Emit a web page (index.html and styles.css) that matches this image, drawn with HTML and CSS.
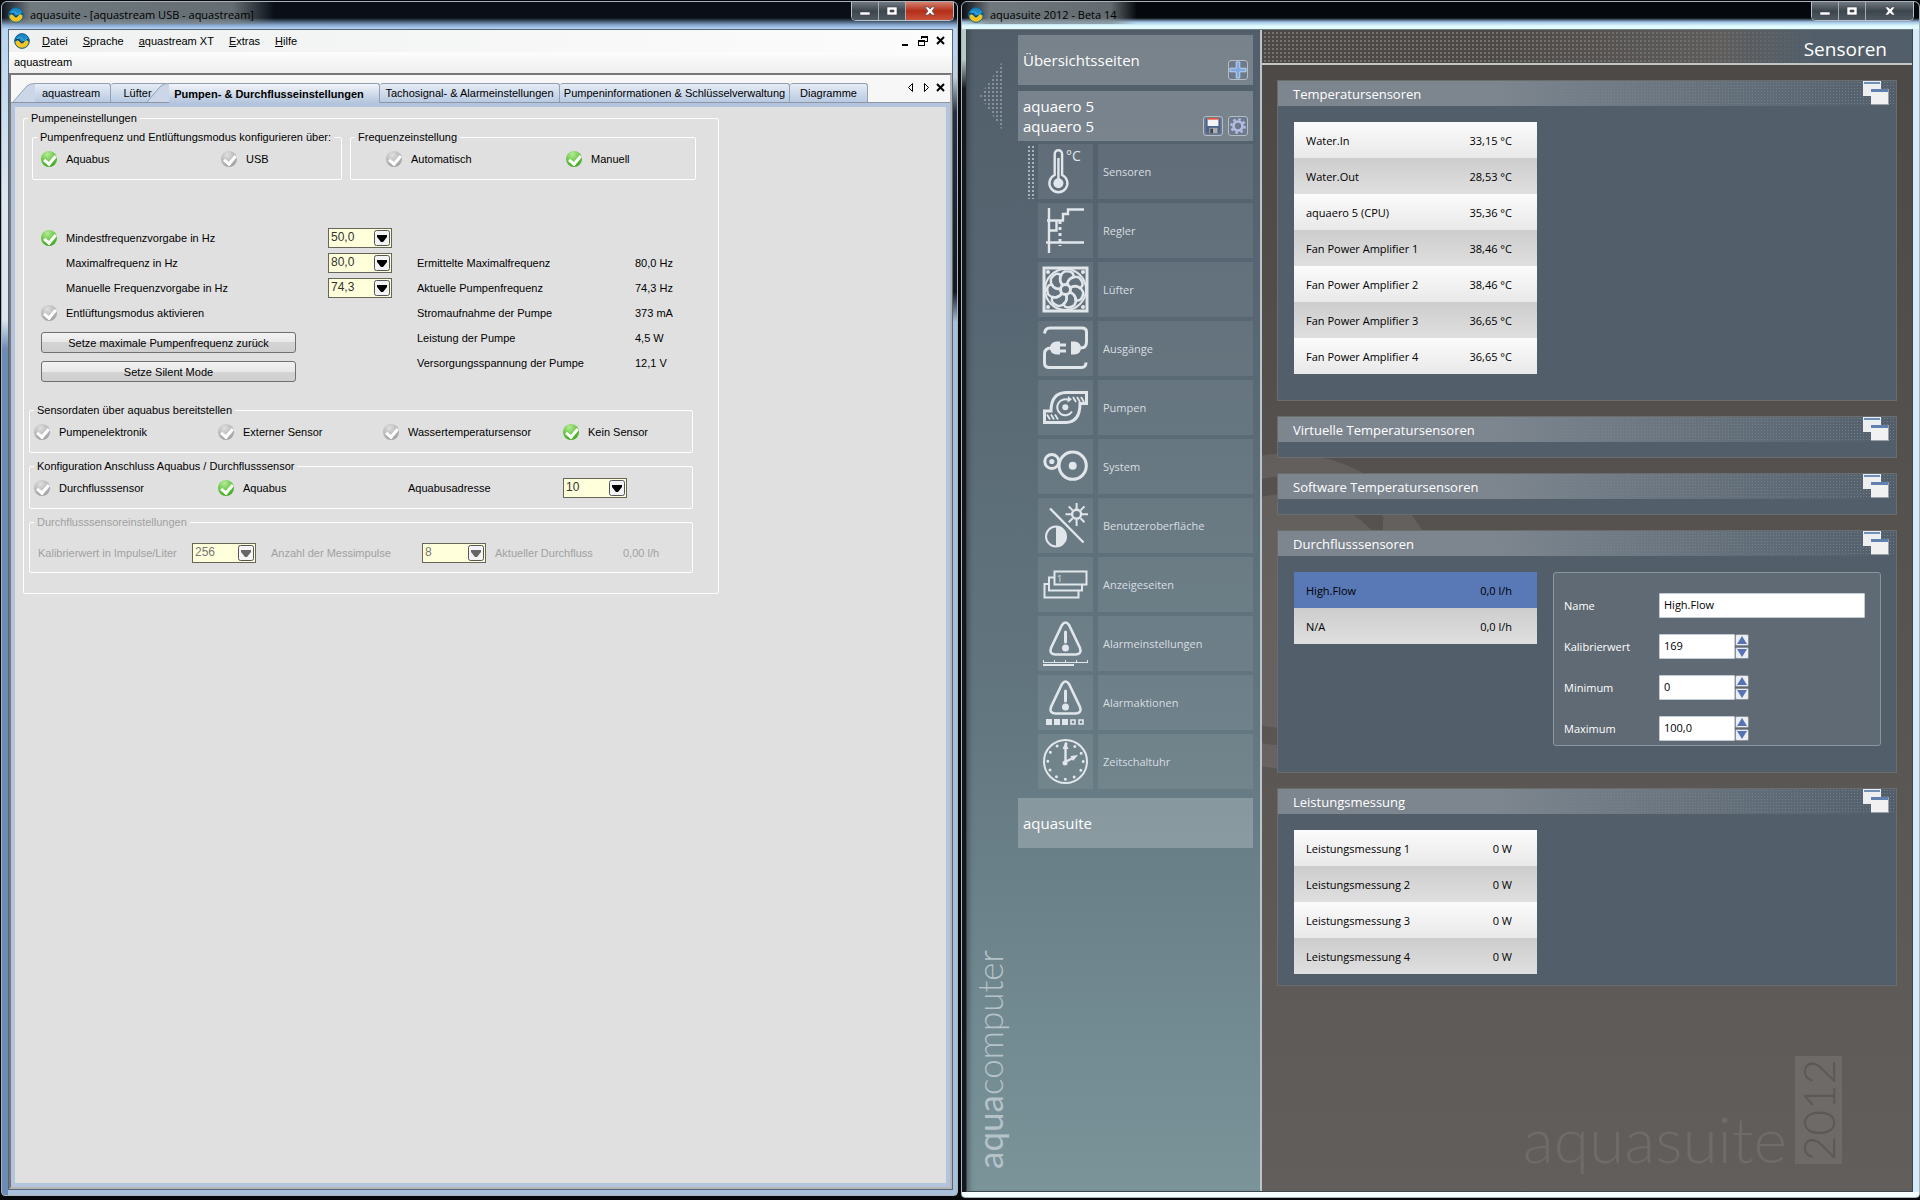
FILE: index.html
```html
<!DOCTYPE html>
<html lang="de">
<head>
    <meta charset="UTF-8">
    <meta name="viewport" content="width=device-width, initial-scale=1.0">
    <title>aquasuite</title>
    <link rel="stylesheet" href="styles.css">
</head>
<body>

    <!-- Shared icons -->
    <svg class="sprite" aria-hidden="true">
        <symbol id="logo" viewBox="0 0 16 16">
            <circle cx="8" cy="8" r="7.500" fill="#1d86c4"/>
            <path d="M1 9q3-3 5 0t4 0 4-1l1 2q-1 5-7 5.500T1 9z" fill="#f2c522"/>
            <path d="M1 7.500q3-2.500 5 .5t4 0T15 7.500" fill="none" stroke="#163c52" stroke-width="1.300"/>
            <path d="M3 6q3-3 5 0t5-1" fill="none" stroke="#2fa4dd" stroke-width="1.500"/>
            <circle cx="8" cy="8" r="7.300" fill="none" stroke="#175f86" stroke-width="1"/>
        </symbol>
        <symbol id="win-min" viewBox="0 0 12 12"><path d="M1 7h10v3H1z" fill="#fff" stroke="#445" stroke-width=".6"/></symbol>
        <symbol id="win-max" viewBox="0 0 12 12"><path d="M1 2h10v8H1zM4 5v2h4V5z" fill="#fff" fill-rule="evenodd" stroke="#445" stroke-width=".6"/></symbol>
        <symbol id="win-close" viewBox="0 0 12 12"><path d="M1 2h3l2 2 2-2h3L8 6l3 4H8L6 8l-2 2H1l3-4z" fill="#fff" stroke="#445" stroke-width=".6"/></symbol>
        <symbol id="arrow" viewBox="0 0 16 16">
            <rect x=".5" y=".5" width="15" height="15" rx="2" fill="#f4f4f4" stroke="#555"/>
            <path d="M3 5h10v2l-4 5H7L3 7z" fill="currentColor"/>
        </symbol>
        <symbol id="windows" viewBox="0 0 26 24">
            <path d="M0 0h18v15H0z" fill="#eceef0"/><path d="M1 1h16v2H1z" fill="#6f8fbb"/>
            <path d="M8 8h18v16H8z" fill="#9aa0a5"/><path d="M8 8h17v15H8z" fill="#f1f1f1"/><path d="M8 8h17v3H8z" fill="#6280ad"/>
        </symbol>
        <symbol id="alarm" viewBox="0 0 45 45">
            <path d="M19 4q3.500-5 7 0l11 23q2 6-4 6.500H12q-6-.5-4-6.500z" fill="none" stroke="#e1e6eb" stroke-width="2.600"/>
            <path d="M22.500 11v10" stroke="#e1e6eb" stroke-width="3" stroke-linecap="round"/>
            <circle cx="22.500" cy="27" r="2" fill="#e1e6eb"/>
        </symbol>
    </svg>

    <div class="desktop">

        <!-- aquasuite, aquastream USB -->
        <section class="window window-classic">
            <header class="titlebar">
                <svg class="logo"><use href="#logo"/></svg>
                <span class="caption">aquasuite - [aquastream USB - aquastream]</span>
                <div class="win-buttons">
                    <button type="button" aria-label="Minimieren"><svg><use href="#win-min"/></svg></button>
                    <button type="button" aria-label="Maximieren"><svg><use href="#win-max"/></svg></button>
                    <button type="button" class="close" aria-label="Schließen"><svg><use href="#win-close"/></svg></button>
                </div>
            </header>

            <div class="client">
                <nav class="menubar">
                    <svg class="logo"><use href="#logo"/></svg>
                    <a href="#"><u>D</u>atei</a>
                    <a href="#"><u>S</u>prache</a>
                    <a href="#"><u>a</u>quastream XT</a>
                    <a href="#"><u>E</u>xtras</a>
                    <a href="#"><u>H</u>ilfe</a>
                    <svg class="mdi" viewBox="0 0 44 12">
                        <path d="M1 9h6v2H1z"/>
                        <path d="M20 1h7v6h-3V6h2V3h-5v1h-1zM17 5h7v6h-7zM18 7v3h5V7z" fill-rule="evenodd"/>
                        <path d="M36 2l7 7M43 2l-7 7" stroke="#000" stroke-width="2"/>
                    </svg>
                </nav>
                <div class="breadcrumb">aquastream</div>

                <div class="document">
                    <div class="tabs">
                        <button type="button" class="tab slant tab-device"><svg viewBox="0 0 22 20" preserveAspectRatio="none"><path d="M0 20L14 3q3-2.500 8-2.500V20z"/><path class="edge" d="M0 20L14 3q3-2.500 8-2.500"/></svg>aquastream</button>
                        <button type="button" class="tab tab-fan">Lüfter</button>
                        <button type="button" class="tab slant active"><svg viewBox="0 0 22 20" preserveAspectRatio="none"><path d="M0 20L14 3q3-2.500 8-2.500V20z"/><path class="edge" d="M0 20L14 3q3-2.500 8-2.500"/></svg>Pumpen- &amp; Durchflusseinstellungen</button>
                        <button type="button" class="tab tab-wide">Tachosignal- &amp; Alarmeinstellungen</button>
                        <button type="button" class="tab tab-info">Pumpeninformationen &amp; Schlüsselverwaltung</button>
                        <button type="button" class="tab tab-chart">Diagramme</button>
                        <svg class="tab-nav" viewBox="0 0 40 12">
                            <path d="M5.500 1.500v8l-4-4zM17.500 1.500v8l4-4z" fill="none" stroke="#000"/>
                            <path d="M30 2l7 7M37 2l-7 7" stroke="#000" stroke-width="2"/>
                        </svg>
                    </div>

                    <form class="page">
                        <fieldset class="pump">
                            <legend>Pumpeneinstellungen</legend>

                            <div class="group-row">
                                <fieldset class="group source">
                                    <legend>Pumpenfrequenz und Entlüftungsmodus konfigurieren über:</legend>
                                    <label><input type="radio" name="source" checked>Aquabus</label>
                                    <label><input type="radio" name="source">USB</label>
                                </fieldset>
                                <fieldset class="group mode">
                                    <legend>Frequenzeinstellung</legend>
                                    <label><input type="radio" name="mode">Automatisch</label>
                                    <label><input type="radio" name="mode" checked>Manuell</label>
                                </fieldset>
                            </div>

                            <div class="frequency">
                                <div class="settings">
                                    <div class="field">
                                        <label><input type="checkbox" checked>Mindestfrequenzvorgabe in Hz</label>
                                        <span class="combo"><select aria-label="Mindestfrequenz"><option>50,0</option></select><svg><use href="#arrow"/></svg></span>
                                    </div>
                                    <div class="field">
                                        <label class="plain" for="max-freq">Maximalfrequenz in Hz</label>
                                        <span class="combo"><select id="max-freq"><option>80,0</option></select><svg><use href="#arrow"/></svg></span>
                                    </div>
                                    <div class="field">
                                        <label class="plain" for="man-freq">Manuelle Frequenzvorgabe in Hz</label>
                                        <span class="combo"><select id="man-freq"><option>74,3</option></select><svg><use href="#arrow"/></svg></span>
                                    </div>
                                    <div class="field">
                                        <label><input type="checkbox">Entlüftungsmodus aktivieren</label>
                                    </div>
                                    <button type="button" class="push">Setze maximale Pumpenfrequenz zurück</button>
                                    <button type="button" class="push">Setze Silent Mode</button>
                                </div>
                                <table class="readings">
                                    <tr><td>Ermittelte Maximalfrequenz</td><td>80,0 Hz</td></tr>
                                    <tr><td>Aktuelle Pumpenfrequenz</td><td>74,3 Hz</td></tr>
                                    <tr><td>Stromaufnahme der Pumpe</td><td>373 mA</td></tr>
                                    <tr><td>Leistung der Pumpe</td><td>4,5 W</td></tr>
                                    <tr><td>Versorgungsspannung der Pumpe</td><td>12,1 V</td></tr>
                                </table>
                            </div>

                            <fieldset class="group four">
                                <legend>Sensordaten über aquabus bereitstellen</legend>
                                <label><input type="radio" name="sensor">Pumpenelektronik</label>
                                <label><input type="radio" name="sensor">Externer Sensor</label>
                                <label><input type="radio" name="sensor">Wassertemperatursensor</label>
                                <label><input type="radio" name="sensor" checked>Kein Sensor</label>
                            </fieldset>

                            <fieldset class="group four">
                                <legend>Konfiguration Anschluss Aquabus / Durchflusssensor</legend>
                                <label><input type="radio" name="port">Durchflusssensor</label>
                                <label><input type="radio" name="port" checked>Aquabus</label>
                                <label class="plain" for="address">Aquabusadresse</label>
                                <span class="combo"><select id="address"><option>10</option></select><svg><use href="#arrow"/></svg></span>
                            </fieldset>

                            <fieldset class="group flow" disabled>
                                <legend>Durchflusssensoreinstellungen</legend>
                                <label for="impulse">Kalibrierwert in Impulse/Liter</label>
                                <span class="combo"><select id="impulse"><option>256</option></select><svg><use href="#arrow"/></svg></span>
                                <label for="count">Anzahl der Messimpulse</label>
                                <span class="combo"><select id="count"><option>8</option></select><svg><use href="#arrow"/></svg></span>
                                <span>Aktueller Durchfluss</span>
                                <span>0,00 l/h</span>
                            </fieldset>
                        </fieldset>
                    </form>
                </div>
            </div>
        </section>

        <!-- aquasuite 2012 -->
        <section class="window window-2012">
            <header class="titlebar">
                <svg class="logo"><use href="#logo"/></svg>
                <span class="caption">aquasuite 2012 - Beta 14</span>
                <div class="win-buttons">
                    <button type="button" aria-label="Minimieren"><svg><use href="#win-min"/></svg></button>
                    <button type="button" aria-label="Maximieren"><svg><use href="#win-max"/></svg></button>
                    <button type="button" class="close" aria-label="Schließen"><svg><use href="#win-close"/></svg></button>
                </div>
            </header>

            <div class="client">
                <aside class="sidebar">
                    <div class="rail">
                        <div class="collapse"></div>
                        <div class="brand"><b>aqua</b>computer</div>
                    </div>
                    <nav class="nav">
                        <div class="card">
                            <span>Übersichtsseiten</span>
                            <button type="button" class="tool" aria-label="Seite hinzufügen"><svg viewBox="0 0 20 20"><path d="M8 1h4v7h7v4h-7v7H8v-7H1V8h7z" fill="#7fa8e0" stroke="#c5d9f4"/></svg></button>
                        </div>
                        <div class="card">
                            <span>aquaero 5<br>aquaero 5</span>
                            <button type="button" class="tool" aria-label="Speichern"><svg viewBox="0 0 20 20"><path d="M2 2h16v16H3l-1-1z" fill="#4c6390"/><path d="M4 2h12v8H4z" fill="#f4f4f6"/><path d="M4 1h12v2H4z" fill="#e0563f"/><path d="M6 12h9v6H6z" fill="#a9adae"/><path d="M7 13h3v5H7z" fill="#444"/></svg></button>
                            <button type="button" class="tool" aria-label="Einstellungen"><svg viewBox="0 0 20 20"><circle cx="10" cy="10" r="5" fill="none" stroke="#b4bce0" stroke-width="3"/><circle cx="10" cy="10" r="7.500" fill="none" stroke="#b4bce0" stroke-width="2.500" stroke-dasharray="3 2.890"/></svg></button>
                        </div>
                        <ul class="menu">
                            <li class="current"><a href="#"><span class="icon"><svg viewBox="0 0 45 45">
                                <path d="M11.700 26V5a3.700 3.700 0 0 1 7.400 0v21a9 9 0 1 1-7.400 0z" stroke-width="2.400"/><path d="M15.400 9v22" stroke-width="2.400"/><circle class="solid" cx="15.400" cy="34.300" r="5"/>
                                <text x="23" y="12" font-size="14">°C</text></svg></span><span class="label">Sensoren</span></a></li>
                            <li><a href="#"><span class="icon"><svg viewBox="0 0 45 45">
                                <path d="M6 0v45M3 34.500h38M4 12.500h16V6h5V1.500h16M6 22.500h7.500v-10" stroke-width="2.400"/><path d="M17 13v25" stroke-dasharray="3 3"/></svg></span><span class="label">Regler</span></a></li>
                            <li><a href="#"><span class="icon"><svg viewBox="0 0 45 45">
                                <path d="M1 1h43v43H1z"/><circle cx="22.500" cy="22.500" r="20.500" stroke-width="2"/><circle cx="22.500" cy="22.500" r="5"/>
                                <circle class="solid" cx="5" cy="5" r="2"/><circle class="solid" cx="40" cy="5" r="2"/><circle class="solid" cx="5" cy="40" r="2"/><circle class="solid" cx="40" cy="40" r="2"/>
                                <g transform="translate(22.500 22.500)">
                                    <path id="petal" d="M-3-4Q-9-13-1-18 9-19 8-12 2-11 2-5" stroke-width="2.400"/>
                                    <use href="#petal" transform="rotate(51)"/><use href="#petal" transform="rotate(103)"/><use href="#petal" transform="rotate(154)"/>
                                    <use href="#petal" transform="rotate(206)"/><use href="#petal" transform="rotate(257)"/><use href="#petal" transform="rotate(309)"/>
                                </g></svg></span><span class="label">Lüfter</span></a></li>
                            <li><a href="#"><span class="icon"><svg viewBox="0 0 45 45">
                                <path d="M1.500 7.500Q2 2 7 2h32q4.500 0 4.500 4v10q0 6-6 6M8 22q-6.500 0-6.500 6v9q0 4.500 5 4.500h32q4.500 0 4.500-5"/>
                                <path class="solid" d="M17 15.500h-4q-6 1-6 6.500t6 6.500h4zM17 17.500h6v3h-6zM17 23.500h6v3h-6zM28 15.500h4q6 1 6 6.500t-6 6.500h-4z"/></svg></span><span class="label">Ausgänge</span></a></li>
                            <li><a href="#"><span class="icon"><svg viewBox="0 0 45 45">
                                <path d="M1.500 26H8Q8 8 23 7.500h20.500v11H37Q37 37 23 37.500H1.500z"/><circle class="solid" cx="22.300" cy="22.300" r="3"/>
                                <path d="M29 26.500a8 8 0 1 1-2.500-11" stroke-width="2"/><path class="solid" d="M25 11l4 3.500-4.500 3z"/>
                                <path d="M30 12l3 5M34 12l3 5M38 12l3 5M4 29.500l3 5M8 29.500l3 5M12 29.500l3 5" stroke-width="1.800"/></svg></span><span class="label">Pumpen</span></a></li>
                            <li><a href="#"><span class="icon"><svg viewBox="0 0 45 45">
                                <circle cx="8.800" cy="17.500" r="7"/><circle class="solid" cx="8.800" cy="17.500" r="2.600"/>
                                <circle cx="29.700" cy="21.700" r="13.600"/><circle class="solid" cx="29.700" cy="21.700" r="4"/></svg></span><span class="label">System</span></a></li>
                            <li><a href="#"><span class="icon"><svg viewBox="0 0 45 45">
                                <path d="M7 5.500l33.500 34" stroke-width="2.400"/><circle cx="13" cy="33.500" r="10" stroke-width="2"/><path class="solid" d="M13 23.500a10 10 0 0 1 0 20z"/>
                                <circle cx="33.600" cy="11.300" r="4.500" stroke-width="2.400"/><path d="M33.600 0v6M33.600 17v6M22.500 11.300h6M39 11.300h6M25.700 3.400l4 4M37.500 15.200l4 4M41.500 3.400l-4 4M29.700 15.200l-4 4" stroke-width="2"/></svg></span><span class="label">Benutzeroberfläche</span></a></li>
                            <li><a href="#"><span class="icon"><svg viewBox="0 0 45 45">
                                <path d="M11.500 9.500h32v13h-32zM11 15.500H6v13h33V23M5 22H1.500v13.500h34V29" stroke-width="2"/>
                                <text x="14" y="20" font-size="9">1</text></svg></span><span class="label">Anzeigeseiten</span></a></li>
                            <li><a href="#"><span class="icon"><svg viewBox="0 0 45 45">
                                <use href="#alarm"/><path d="M0 41.500h45M.5 39v3M11.500 39v3M22.500 39v3M33.500 39v3M44.500 39v3" stroke-width="1"/><path d="M0 44h31" stroke-width="2"/></svg></span><span class="label">Alarmeinstellungen</span></a></li>
                            <li><a href="#"><span class="icon"><svg viewBox="0 0 45 45">
                                <use href="#alarm"/><path class="solid" d="M3 39h6v6H3zM11 39h6v6h-6zM19 39h6v6h-6z"/><path d="M28 40h4v4h-4zM36 40h4v4h-4z" stroke-width="1.600"/></svg></span><span class="label">Alarmaktionen</span></a></li>
                            <li><a href="#"><span class="icon"><svg viewBox="0 0 45 45">
                                <circle cx="22.500" cy="22.500" r="21.500" stroke-width="2"/><circle cx="22.500" cy="22.500" r="17.700" stroke-dasharray="0 9.268" stroke-linecap="round"/>
                                <path d="M22.500 23V8M22 23l8-4" stroke-width="2.400"/><path class="solid" d="M22.500 3l3 7h-6zM35 16l-5 6-2.500-5z"/><circle class="solid" cx="22" cy="24" r="2.500"/></svg></span><span class="label">Zeitschaltuhr</span></a></li>
                        </ul>
                        <div class="card">
                            <span>aquasuite</span>
                        </div>
                    </nav>
                </aside>

                <main class="main">
                    <svg class="ring" viewBox="0 0 190 328">
                        <circle cx="25" cy="164" r="146" fill="none" stroke="#fff" stroke-width="23"/>
                        <circle cx="25" cy="164" r="117" fill="#fff"/>
                        <path d="M121 72h29v20h-29z" fill="#fff"/>
                    </svg>
                    <header class="page-title"><h1>Sensoren</h1></header>

                    <div class="panels">
                        <article class="panel">
                            <header><h2>Temperatursensoren</h2><svg><use href="#windows"/></svg></header>
                            <div class="body">
                                <table class="list">
                                    <tr><td>Water.In</td><td>33,15 °C</td></tr>
                                    <tr><td>Water.Out</td><td>28,53 °C</td></tr>
                                    <tr><td>aquaero 5 (CPU)</td><td>35,36 °C</td></tr>
                                    <tr><td>Fan Power Amplifier 1</td><td>38,46 °C</td></tr>
                                    <tr><td>Fan Power Amplifier 2</td><td>38,46 °C</td></tr>
                                    <tr><td>Fan Power Amplifier 3</td><td>36,65 °C</td></tr>
                                    <tr><td>Fan Power Amplifier 4</td><td>36,65 °C</td></tr>
                                </table>
                            </div>
                        </article>
                        <article class="panel collapsed">
                            <header><h2>Virtuelle Temperatursensoren</h2><svg><use href="#windows"/></svg></header>
                        </article>
                        <article class="panel collapsed">
                            <header><h2>Software Temperatursensoren</h2><svg><use href="#windows"/></svg></header>
                        </article>
                        <article class="panel">
                            <header><h2>Durchflusssensoren</h2><svg><use href="#windows"/></svg></header>
                            <div class="body">
                                <table class="list">
                                    <tr class="selected"><td>High.Flow</td><td>0,0 l/h</td></tr>
                                    <tr><td>N/A</td><td>0,0 l/h</td></tr>
                                </table>
                                <form class="details">
                                    <label for="name">Name</label>
                                    <input type="text" id="name" value="High.Flow">
                                    <label for="calibration">Kalibrierwert</label>
                                    <span class="spin"><input type="text" id="calibration" value="169"><button type="button" aria-label="Mehr"></button><button type="button" class="down" aria-label="Weniger"></button></span>
                                    <label for="minimum">Minimum</label>
                                    <span class="spin"><input type="text" id="minimum" value="0"><button type="button" aria-label="Mehr"></button><button type="button" class="down" aria-label="Weniger"></button></span>
                                    <label for="maximum">Maximum</label>
                                    <span class="spin"><input type="text" id="maximum" value="100,0"><button type="button" aria-label="Mehr"></button><button type="button" class="down" aria-label="Weniger"></button></span>
                                </form>
                            </div>
                        </article>
                        <article class="panel last">
                            <header><h2>Leistungsmessung</h2><svg><use href="#windows"/></svg></header>
                            <div class="body">
                                <table class="list">
                                    <tr><td>Leistungsmessung 1</td><td>0 W</td></tr>
                                    <tr><td>Leistungsmessung 2</td><td>0 W</td></tr>
                                    <tr><td>Leistungsmessung 3</td><td>0 W</td></tr>
                                    <tr><td>Leistungsmessung 4</td><td>0 W</td></tr>
                                </table>
                            </div>
                        </article>
                    </div>

                    <footer class="watermark"><span>aquasuite</span><b>2012</b></footer>
                </main>
            </div>
        </section>
    </div>

</body>
</html>
```
FILE: styles.css
```css
:root {
    --face: #e0e0e0;
    --tab-blue: #b3c4dc;
    --slate: #525f6b;
    --slate-light: #7d868f;
    --icon: #e1e6eb;
    --classic: "Liberation Sans", Arial, sans-serif;
    --segoe: "Open Sans", "Segoe UI", sans-serif;
}

* {
    box-sizing: border-box;
}

body {
    margin: 0;
    background: #05070a;
    font-family: var(--segoe);
    font-size: 11px;
    color: #000;
}

button, input, select {
    font: inherit;
    color: inherit;
    margin: 0;
    padding: 0;
}

a {
    color: inherit;
    text-decoration: none;
}

.sprite {
    display: none;
}

.desktop {
    display: grid;
    grid-template-columns: 957fr 959fr;
    gap: 3px;
    min-height: 100vh;
    padding: 1px 0 2px 1px;
}

/* Window frames */
.window {
    display: flex;
    flex-direction: column;
    border: 1px solid #a9b2bb;
    border-radius: 6px 6px 4px 4px;
}

.window-classic {
    padding: 0 4px 5px 6px;
    background:
        linear-gradient(#0a0f17, #0a0f17 16px, #86a8cf 23px, #b8d4f2 27px) 0 0 / 100% 27px no-repeat,
        linear-gradient(#b8d4f2, #dfe8f0 180px, #dfe8f0 290px, #6d8cb5 320px, #6d8cb5) 0 27px / 6px 100% no-repeat,
        linear-gradient(#b8d4f2, #b8d4f2 50px, #c3cfda 75px, #27303b 110px, #14191f 290px, #a9c0dc 320px, #a9c0dc);
    margin-bottom: 2px;
}

.window-2012 {
    padding: 0 6px 5px 4px;
    background:
        linear-gradient(#05080c, #05080c 16px, #9fc4e4 20px, #e2fbff 24px) 0 0 / 100% 27px no-repeat,
        linear-gradient(#f4fdff, #f4fdff) 0 100% / 100% 5px no-repeat,
        linear-gradient(#b9cbc5, #b9cbc5 30px, #14181d) 0 27px / 30px 60px no-repeat,
        linear-gradient(90deg, #14181d 50%, #d6ecfb 50%);
}

.titlebar {
    display: flex;
    align-items: flex-start;
    height: 27px;
    margin-right: -1px;
}

.titlebar .logo {
    width: 16px;
    height: 16px;
    margin: 5px 6px 0 0;
}

.window-2012 .titlebar .logo {
    margin-left: 2px;
}

.caption {
    padding: 4px 20px 0 30px;
    margin-left: -30px;
    line-height: 18px;
    white-space: nowrap;
    background: linear-gradient(90deg, rgba(130, 140, 145, 0), rgba(130, 140, 145, .85) 30px, rgba(130, 140, 145, .75) 85%, rgba(130, 140, 145, 0));
}

.logo {
    position: relative;
    z-index: 1;
    flex: none;
}

.win-buttons {
    display: flex;
    margin-left: auto;
    border: 1px solid #b9bfc6;
    border-top: 0;
    border-radius: 0 0 5px 5px;
    overflow: hidden;
}

.win-buttons button {
    width: 27px;
    height: 18px;
    border: 0;
    border-right: 1px solid #a4abb2;
    background: linear-gradient(#6f7880, #3d454c 50%, #4f5962);
}

.win-buttons svg {
    display: block;
    width: 12px;
    height: 12px;
    margin: 0 auto;
}

.win-buttons .close {
    width: 47px;
    border-right: 0;
}

.window-classic .close {
    background: linear-gradient(#d3816f, #b42e18 50%, #c9513a);
}

.client {
    flex: 1;
    display: flex;
}

/* Classic window */
.window-classic .client {
    flex-direction: column;
    border: 1px solid #56677c;
    background: #fbfbfb;
    font-family: var(--classic);
}

.menubar {
    display: flex;
    align-items: center;
    gap: 15px;
    height: 22px;
    padding: 0 7px 0 5px;
    background: linear-gradient(90deg, #eff1f0, #fcfcfc);
}

.menubar .logo {
    width: 16px;
    height: 16px;
    margin-right: -3px;
}

.mdi {
    width: 44px;
    height: 12px;
    margin-left: auto;
}

.breadcrumb {
    height: 21px;
    padding-left: 5px;
    line-height: 20px;
    background: linear-gradient(#fdfdfd, #eeeeee);
}

.document {
    flex: 1;
    display: flex;
    flex-direction: column;
    border: 2px solid #777;
    border-right-color: #b5b5b5;
    border-bottom-color: #b5b5b5;
}

.tabs {
    display: flex;
    align-items: flex-end;
    height: 28px;
    padding-left: 24px;
    border-bottom: 1px solid #8c96a4;
    background: #f7f7f7;
}

.tab {
    position: relative;
    height: 19px;
    border: 1px solid #94a0b0;
    border-width: 1px 1px 0 0;
    border-radius: 3px 3px 0 0;
    background: linear-gradient(#e6ecf5, #b9cae2);
    white-space: nowrap;
}

.slant {
    border-radius: 0 3px 0 0;
}

.slant svg {
    position: absolute;
    right: 100%;
    top: -1px;
    width: 22px;
    height: 19px;
    fill: #cbd7e8;
}

.slant .edge {
    fill: none;
    stroke: #94a0b0;
}

.tab-device {
    width: 76px;
    padding-right: 3px;
}

.tab-fan {
    width: 58px;
    padding-right: 4px;
}

.active {
    z-index: 1;
    width: 211px;
    height: 20px;
    margin-bottom: -1px;
    padding-right: 10px;
    font-weight: bold;
    background: linear-gradient(#f2f5fa, var(--tab-blue));
}

.tab-wide {
    width: 180px;
}

.tab-info {
    width: 230px;
}

.tab-chart {
    width: 78px;
}

.tab-nav {
    width: 40px;
    height: 12px;
    margin: 0 3px 8px auto;
}

.page {
    flex: 1;
    padding: 4px 8px;
    border: 4px solid var(--tab-blue);
    background: var(--face);
}

fieldset {
    margin: 0;
    padding: 0;
    border: 1px solid #fff;
    border-radius: 2px;
    min-width: 0;
}

legend {
    margin-left: 4px;
    padding: 0 3px;
    line-height: 14px;
}

.pump {
    max-width: 696px;
    padding: 5px 25px 20px 5px;
}

.pump > legend {
    margin-left: -1px;
}

.group {
    display: grid;
    align-items: center;
    height: 50px;
    padding: 0 0 5px 4px;
    margin-bottom: 6px;
}

.group-row {
    display: grid;
    grid-template-columns: 310px 346px;
    gap: 8px;
    margin-left: 3px;
}

.source {
    grid-template-columns: 180px 1fr;
    padding-left: 8px;
}

.mode {
    grid-template-columns: 180px 1fr;
    padding-left: 35px;
}

.source legend {
    margin-left: -4px;
}

.mode legend {
    margin-left: -31px;
}

.four {
    grid-template-columns: 184px 165px 180px 1fr;
}

.four legend {
    margin-left: 0;
}

.flow {
    grid-template-columns: 154px 79px 151px 73px 128px 1fr;
    height: 58px;
    padding: 4px 0 0 8px;
    margin-bottom: 0;
    color: #a0a0a0;
}

.flow legend {
    margin-left: -4px;
}

.page label {
    display: flex;
    align-items: center;
    gap: 9px;
}

.four .plain {
    padding-left: 25px;
}

/* Round green / grey check marks */
input[type="radio"], input[type="checkbox"] {
    appearance: none;
    position: relative;
    width: 16px;
    height: 16px;
    border-radius: 50%;
    background: radial-gradient(circle at 40% 25%, #e0e0e0, #a4a4a4 75%, #8e8e8e);
}

input[type="radio"]:checked, input[type="checkbox"]:checked {
    background: radial-gradient(circle at 40% 20%, #b4ec95, #4fb72d 65%, #3b9320);
}

input[type="radio"]::after, input[type="checkbox"]::after {
    content: "";
    position: absolute;
    left: 5px;
    top: 2px;
    width: 5px;
    height: 9px;
    border: solid #fff;
    border-width: 0 3px 3px 0;
    transform: rotate(40deg);
}

.frequency {
    display: grid;
    grid-template-columns: 376px auto;
    align-items: start;
    justify-content: start;
    margin: 39px 0 21px 12px;
}

.field {
    display: grid;
    grid-template-columns: 287px 64px;
    align-items: center;
    height: 25px;
}

.field .plain {
    padding-left: 25px;
}

.combo {
    position: relative;
    width: 64px;
    height: 20px;
}

.combo select {
    appearance: none;
    display: block;
    width: 100%;
    height: 100%;
    padding: 0 20px 2px 2px;
    border: 1px solid #66665a;
    border-radius: 0;
    background: #ffffdc;
    font-size: 12px;
    color: #333;
    opacity: 1;
}

.combo svg {
    position: absolute;
    right: 2px;
    top: 2px;
    width: 16px;
    height: 16px;
    pointer-events: none;
}

.flow .combo {
    color: #666;
}

.flow select {
    color: #777;
}

.push {
    display: block;
    width: 255px;
    height: 21px;
    margin: 7px 0 0;
    border: 1px solid #707070;
    border-radius: 3px;
    background: linear-gradient(#f2f2f2, #e8e8e8 50%, #d4d4d4 50%, #cfcfcf);
}

.push + .push {
    margin-top: 8px;
}

.readings {
    margin-top: 25px;
    border-collapse: collapse;
}

.readings td {
    height: 25px;
    padding: 0;
}

.readings td:first-child {
    width: 218px;
}

/* 2012 window */
.window-2012 .client {
    border: 1px solid #3c464e;
    border-top-color: #6d7b7d;
}

.sidebar {
    display: flex;
    flex: none;
    width: 295px;
    border-right: 2px solid #bcc4c8;
    background: linear-gradient(#525f6b, #566571 20%, #637780 60%, #7a949a);
    box-shadow: inset 5px 0 5px -3px rgba(40, 50, 55, .5);
}

.rail {
    display: flex;
    flex-direction: column;
    justify-content: space-between;
    width: 51px;
    padding: 29px 0 22px 4px;
}

.collapse {
    width: 24px;
    height: 74px;
    margin-left: 9px;
    background: conic-gradient(at 2px 2px, transparent 75%, #84919b 0) 0 0 / 4px 4px;
    clip-path: polygon(0 50%, 100% 0, 100% 100%);
}

.brand {
    writing-mode: vertical-rl;
    transform: rotate(180deg);
    font-family: Lato, sans-serif;
    font-weight: 300;
    font-size: 35px;
    line-height: 36px;
    color: #b5c3c9;
}

.brand b {
    font-weight: 400;
}

.nav {
    width: 235px;
    padding-top: 5px;
}

.card {
    display: flex;
    align-items: center;
    gap: 5px;
    height: 50px;
    margin-bottom: 6px;
    padding: 0 5px;
    background: rgba(255, 255, 255, .22);
    color: #fff;
    font-size: 15px;
    line-height: 20px;
}

.card span {
    flex: 1;
}

.tool {
    align-self: flex-end;
    width: 20px;
    height: 20px;
    margin-bottom: 5px;
    border: 1px solid #b4bcc4;
    border-radius: 3px;
    background: #6d7a8c;
}

.tool svg {
    display: block;
    width: 18px;
    height: 18px;
}

.menu {
    margin: -3px 0 9px;
    padding: 0 0 0 10px;
    list-style: none;
}

.menu li {
    padding-left: 10px;
    margin-bottom: 4px;
}

.menu .current {
    background:
        conic-gradient(at 2px 2px, transparent 75%, #a9b3ba 0) 0 2px / 4px 4px repeat-y,
        conic-gradient(at 2px 2px, transparent 75%, #a9b3ba 0) 4px 2px / 4px 4px repeat-y;
}

.menu a {
    display: grid;
    grid-template-columns: 55px 1fr;
    gap: 5px;
    height: 55px;
    color: #d8dde1;
}

.icon, .label {
    background: rgba(255, 255, 255, .08);
}

.label {
    padding-left: 5px;
    line-height: 55px;
}

.icon svg {
    display: block;
    width: 45px;
    height: 45px;
    margin: 5px;
    overflow: visible;
    fill: none;
    stroke: var(--icon);
    stroke-width: 3;
}

.icon .solid, .icon text {
    fill: var(--icon);
    stroke: none;
}

.main {
    position: relative;
    flex: 1;
    display: flex;
    flex-direction: column;
    background: linear-gradient(#4c4845, #54504e 35%, #625e5c);
}

.ring {
    position: absolute;
    left: 0;
    top: 417px;
    width: 190px;
    height: 328px;
    opacity: .08;
}

.page-title {
    height: 35px;
    border-bottom: 2px solid #c3c6c7;
    background:
        linear-gradient(90deg, transparent 35%, rgba(106, 106, 106, .6) 70%, var(--slate) 85%),
        conic-gradient(at 2px 2px, transparent 75%, #757270 0) 2px 2px / 4px 4px;
}

h1, h2 {
    margin: 0;
    font-weight: normal;
    color: #fff;
}

h1 {
    padding: 6px 25px 0 0;
    text-align: right;
    font-size: 19px;
    line-height: 26px;
}

.panels {
    position: relative;
    display: flex;
    flex-direction: column;
    gap: 15px;
    padding: 15px;
}

.panel {
    border: 1px solid #6b6c6e;
    background: var(--slate);
}

.panel header {
    display: flex;
    justify-content: space-between;
    height: 25px;
    padding: 0 7px 0 15px;
    background:
        linear-gradient(90deg, var(--slate-light) 35%, rgba(82, 95, 107, .5)),
        conic-gradient(at 1px 1px, transparent 75%, #8a99a5 0) 0 1px / 3px 3px var(--slate);
}

.panel header svg {
    width: 26px;
    height: 24px;
}

h2 {
    font-size: 13px;
    line-height: 27px;
}

.body {
    display: flex;
    align-items: flex-start;
    gap: 16px;
    padding: 16px 15px 26px 16px;
}

.last .body {
    padding-bottom: 11px;
}

.collapsed {
    padding-bottom: 15px;
}

.list {
    width: 243px;
    border-collapse: collapse;
}

.list tr {
    background: linear-gradient(#fbfbfb, #e9e9e9);
}

.list tr:nth-child(even) {
    background: linear-gradient(#cdcdcd, #dfdfdf);
}

.list .selected {
    background: #5878b6;
}

.list td {
    height: 36px;
    padding: 0 0 0 12px;
}

.list td:last-child {
    padding: 0 25px 0 0;
    text-align: right;
}

.details {
    flex: 1;
    display: grid;
    grid-template-columns: 95px 1fr;
    grid-auto-rows: 25px;
    row-gap: 16px;
    align-items: center;
    padding: 20px 15px 4px 10px;
    border: 1px solid #8b959e;
    border-radius: 3px;
    background: #606a74;
    color: #fff;
}

.details input {
    width: 100%;
    height: 25px;
    padding: 0 4px 2px;
    border: 1px solid #c3ccd6;
    border-radius: 1px;
    background: #fff;
    color: #000;
}

.spin {
    display: grid;
    grid-template-columns: 76px 14px;
    grid-template-rows: 12px 12px;
    row-gap: 1px;
    justify-content: start;
}

.spin input {
    grid-row: 1 / 3;
}

.spin button {
    border: 1px solid #8c9299;
    border-radius: 2px;
    background: #eceef1;
}

.spin button::before {
    content: "";
    display: block;
    width: 10px;
    height: 8px;
    margin: 0 auto;
    background: #5574b4;
    clip-path: polygon(50% 0, 100% 100%, 0 100%);
}

.spin .down::before {
    clip-path: polygon(0 0, 100% 0, 50% 100%);
}

.watermark {
    display: flex;
    align-items: flex-end;
    justify-content: flex-end;
    gap: 8px;
    margin: auto 70px 27px 0;
    font-family: Lato, sans-serif;
    font-weight: 300;
    color: #6e6b69;
}

.watermark span {
    font-size: 64px;
    line-height: 50px;
}

.watermark b {
    width: 47px;
    height: 108px;
    writing-mode: vertical-rl;
    transform: rotate(180deg);
    background: #6d6a68;
    color: #5c5856;
    font-weight: 300;
    font-size: 44px;
    line-height: 47px;
    text-align: center;
}
```
